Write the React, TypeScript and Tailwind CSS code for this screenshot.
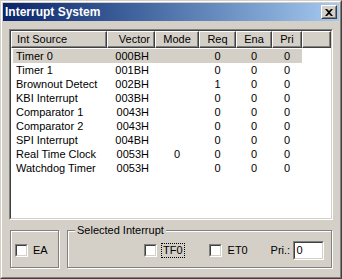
import React from "react";

type Row = { src: string; vec: string; mode: string; req: string; ena: string; pri: string };

const rows: Row[] = [
  { src: "Timer 0", vec: "000BH", mode: "", req: "0", ena: "0", pri: "0" },
  { src: "Timer 1", vec: "001BH", mode: "", req: "0", ena: "0", pri: "0" },
  { src: "Brownout Detect", vec: "002BH", mode: "", req: "1", ena: "0", pri: "0" },
  { src: "KBI Interrupt", vec: "003BH", mode: "", req: "0", ena: "0", pri: "0" },
  { src: "Comparator 1", vec: "0043H", mode: "", req: "0", ena: "0", pri: "0" },
  { src: "Comparator 2", vec: "0043H", mode: "", req: "0", ena: "0", pri: "0" },
  { src: "SPI Interrupt", vec: "004BH", mode: "", req: "0", ena: "0", pri: "0" },
  { src: "Real Time Clock", vec: "0053H", mode: "0", req: "0", ena: "0", pri: "0" },
  { src: "Watchdog Timer", vec: "0053H", mode: "", req: "0", ena: "0", pri: "0" },
];

// Win2k raised header cell
function HeadCell({ w, children, align }: { w: string; children?: React.ReactNode; align: string }) {
  return (
    <div
      className={`${w} h-full flex items-center ${align} border border-t-white border-l-white border-r-[#404040] border-b-[#404040] shadow-[inset_-1px_-1px_0_#808080]`}
    >
      {children}
    </div>
  );
}

function CheckBox() {
  return (
    <div className="w-[13px] h-[13px] flex border border-t-[#808080] border-l-[#808080] border-r-white border-b-white">
      <div className="flex-1 bg-white border border-t-[#404040] border-l-[#404040] border-r-[#D4D0C8] border-b-[#D4D0C8]" />
    </div>
  );
}

export default function App() {
  return (
    <div
      className="w-[342px] h-[279px] flex bg-[#D4D0C8] text-black text-[11px] leading-none border border-t-[#D4D0C8] border-l-[#D4D0C8] border-r-[#404040] border-b-[#404040]"
      style={{ fontFamily: '"Liberation Sans", Arial, sans-serif' }}
    >
      <div className="flex-1 flex flex-col p-px border border-t-white border-l-white border-r-[#808080] border-b-[#808080]">
        {/* Title bar */}
        <div className="h-[18px] flex items-center justify-between bg-gradient-to-r from-[#0A246A] to-[#A6CAF0] pl-[2px] pr-[2px]">
          <span className="text-white font-bold text-[12px]">Interrupt System</span>
          <div className="w-[16px] h-[14px] flex border border-t-white border-l-white border-r-[#404040] border-b-[#404040] bg-[#D4D0C8]">
            <div className="flex-1 flex items-center justify-center border border-t-[#D4D0C8] border-l-[#D4D0C8] border-r-[#808080] border-b-[#808080]">
              <svg width="8" height="7" viewBox="0 0 8 7">
                <path d="M0 0h2l2 2 2-2h2L5 3.5 8 7H6L4 5 2 7H0l3-3.5z" fill="#000" />
              </svg>
            </div>
          </div>
        </div>

        {/* List */}
        <div className="ml-[6px] mt-[8px] w-[324px] h-[191px] flex border border-t-[#808080] border-l-[#808080] border-r-white border-b-white">
          <div className="flex-1 flex flex-col bg-white border border-t-[#404040] border-l-[#404040] border-r-[#D4D0C8] border-b-[#D4D0C8]">
            <div className="h-[17px] flex bg-[#D4D0C8]">
              <HeadCell w="w-[96px]" align="justify-start pl-[5px]">Int Source</HeadCell>
              <HeadCell w="w-[48px]" align="justify-end pr-[4px]">Vector</HeadCell>
              <HeadCell w="w-[44px]" align="justify-center">Mode</HeadCell>
              <HeadCell w="w-[37px]" align="justify-center">Req</HeadCell>
              <HeadCell w="w-[36px]" align="justify-center">Ena</HeadCell>
              <HeadCell w="w-[30px]" align="justify-center">Pri</HeadCell>
              <HeadCell w="flex-1" align="" />
            </div>
            <div className="pl-[2px] pt-px">
              {rows.map((r, i) => (
                <div key={r.src} className={`w-[289px] h-[14px] flex items-center ${i === 0 ? "bg-[#D4D0C8]" : ""}`}>
                  <div className="w-[94px] pl-[3px] whitespace-nowrap">{r.src}</div>
                  <div className="w-[48px] text-right pr-[6px]">{r.vec}</div>
                  <div className="w-[44px] text-center">{r.mode}</div>
                  <div className="w-[37px] text-center">{r.req}</div>
                  <div className="w-[36px] text-center">{r.ena}</div>
                  <div className="w-[30px] text-center">{r.pri}</div>
                </div>
              ))}
            </div>
          </div>
        </div>

        {/* Bottom groups */}
        <div className="mt-[10px] flex">
          <div className="ml-[7px] w-[49px] h-[38px] flex items-center pl-[4px] pt-[2px] gap-[5px] border border-[#808080] shadow-[inset_1px_1px_0_#fff,1px_1px_0_#fff]">
            <CheckBox />
            <span>EA</span>
          </div>
          <div className="relative ml-[8px] w-[265px] h-[38px] flex items-center pl-[76px] pt-[2px] border border-[#808080] shadow-[inset_1px_1px_0_#fff,1px_1px_0_#fff]">
            <span className="absolute left-[7px] -top-[6px] px-[2px] bg-[#D4D0C8]">Selected Interrupt</span>
            <CheckBox />
            <span className="ml-[4px] px-px py-px border border-dotted border-black">TF0</span>
            <div className="ml-[24px]">
              <CheckBox />
            </div>
            <span className="ml-[6px] w-[43px]">ET0</span>
            <span className="w-[22px]">Pri.:</span>
            <div className="w-[31px] h-[19px] flex border border-t-[#808080] border-l-[#808080] border-r-white border-b-white">
              <div className="flex-1 flex items-center pl-[2px] bg-white border border-t-[#404040] border-l-[#404040] border-r-[#D4D0C8] border-b-[#D4D0C8]">
                0
              </div>
            </div>
          </div>
        </div>
      </div>
    </div>
  );
}
